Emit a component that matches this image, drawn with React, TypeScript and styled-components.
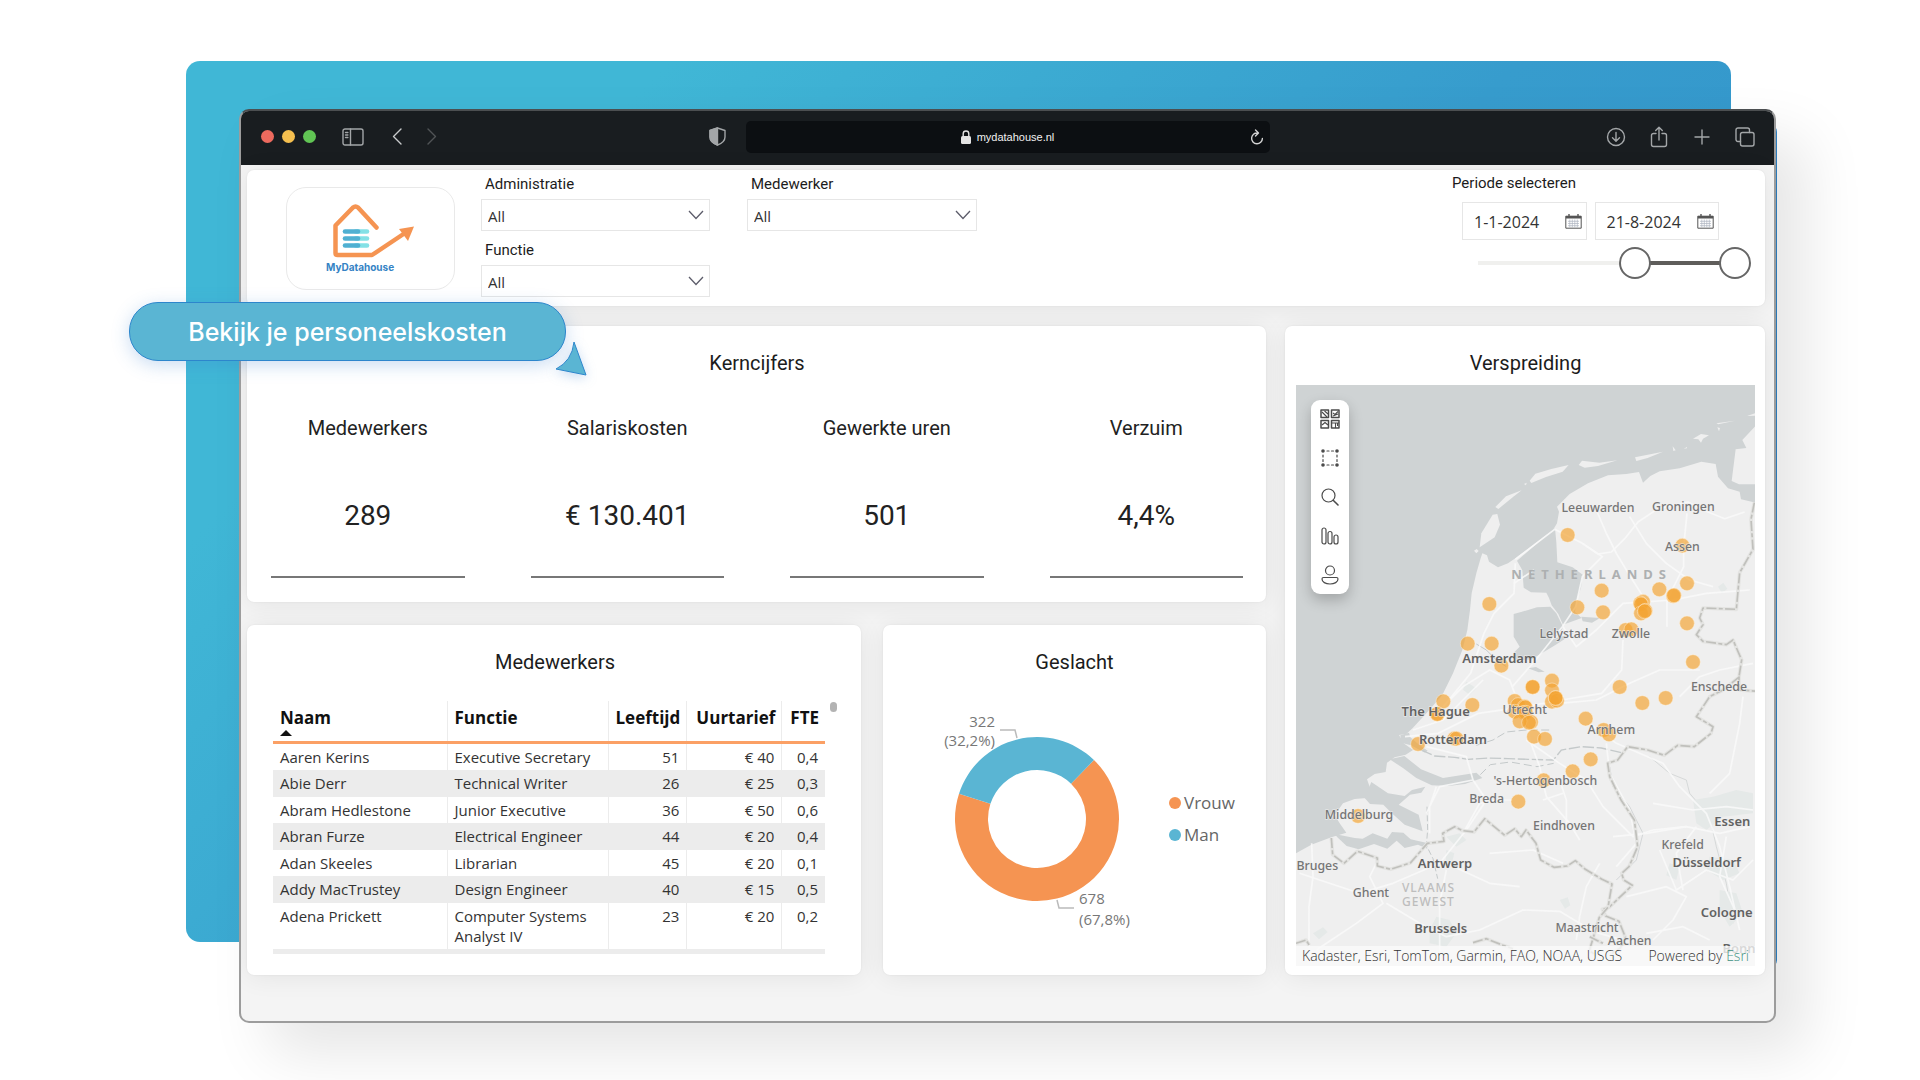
import React from "react";
import styled, { createGlobalStyle } from "styled-components";

const ui = `"Open Sans", "Noto Sans", sans-serif`;
const heading = `Roboto, "Open Sans", sans-serif`;
const orange = "#f59452";
const blue = "#5ab5d3";

const GlobalStyle = createGlobalStyle`
  *, *::before, *::after { box-sizing: border-box; }
  body { margin: 0; background: #fff; font-family: ${ui}; color: #222; }
  button, input, select { font: inherit; color: inherit; }
`;

const Page = styled.main`
  min-height: 100vh;
  display: grid;
  padding: 61px 143px 57px 129px;
  overflow: hidden;
`;
const layer = `grid-area: 1 / 1;`;
const Backdrop = styled.div`
  ${layer}
  margin: 0 46px 81px 57px;
  border-radius: 14px;
  background: linear-gradient(135deg, #40b7d6 0%, #40b7d6 20%, #379ccd 55%, #2f8fca 100%);
`;
const Accent = styled.div`
  ${layer}
  margin: 63px 0 55px 111px;
  border-radius: 8px;
  background: #2d83c8;
`;
const BrowserWindow = styled.section`
  ${layer}
  margin: 48px 1px 0 110px;
  display: flex;
  flex-direction: column;
  border: 2px solid #9c9c9c;
  border-top-color: #4c4f51;
  border-radius: 10px;
  background: #f4f4f4;
  box-shadow: 30px 30px 60px rgba(0, 0, 0, 0.1);
  overflow: hidden;
`;

/* Browser chrome */
const Chrome = styled.header`
  display: grid;
  grid-template-columns: 1fr minmax(0, 524px) 1fr;
  align-items: center;
  height: 54px;
  padding-bottom: 3px;
  flex: none;
  background: #191d20;
  color: #a3a6a8;
`;
const ChromeSide = styled.div<{ $end?: boolean }>`
  display: flex;
  align-items: center;
  gap: ${(p) => (p.$end ? "21px" : "22px")};
  padding: ${(p) => (p.$end ? "0 18px 0 0" : "0 17px 0 20px")};
  justify-content: ${(p) => (p.$end ? "flex-end" : "flex-start")};
`;
const NavButtons = styled.nav`
  display: flex;
  gap: 13px;
`;
const Lights = styled.div`
  display: flex;
  gap: 8px;
  margin-right: 4px;
`;
const Light = styled.i<{ $color: string }>`
  width: 13px;
  height: 13px;
  border-radius: 50%;
  background: ${(p) => p.$color};
`;
const IconButton = styled.button<{ $dim?: boolean; $push?: boolean }>`
  display: grid;
  place-items: center;
  width: 22px;
  height: 22px;
  padding: 0;
  border: 0;
  background: none;
  opacity: ${(p) => (p.$dim ? 0.4 : 1)};
  margin-left: ${(p) => (p.$push ? "auto" : "0")};
  svg { display: block; }
`;
const Address = styled.div`
  display: grid;
  grid-template-columns: 22px 1fr 22px;
  align-items: center;
  height: 32px;
  padding: 0 2px;
  border-radius: 5px;
  background: #0c0f12;
`;
const Site = styled.span`
  grid-column: 2;
  display: flex;
  justify-content: center;
  align-items: center;
  gap: 6px;
  color: #f1f1f1;
  font: 11px/16px "Liberation Sans", sans-serif;
`;

/* Dashboard */
const Board = styled.div`
  display: grid;
  grid-template-columns: minmax(0, 1019fr) minmax(0, 480fr);
  gap: 20px 19px;
  padding: 5px 9px 46px 6px;
`;
const Card = styled.section<{ $wide?: boolean }>`
  background: #fff;
  border-radius: 7px;
  box-shadow: 0 0 2px rgba(0, 0, 0, 0.08), 0 2px 26px rgba(0, 0, 0, 0.07);
  grid-column: ${(p) => (p.$wide ? "1 / -1" : "auto")};
  min-width: 0;
`;
const Title = styled.h2`
  margin: 0;
  font: 400 20px/24px ${heading};
  text-align: center;
  color: #1c1c1c;
`;
const TopBar = styled(Card)`
  display: flex;
  align-items: flex-start;
  min-height: 136px;
  padding: 0 14px 0 39px;
`;
const Logo = styled.figure`
  width: 169px;
  height: 103px;
  margin: 17px 26px 0 0;
  padding: 16px 0 0 39px;
  border: 1px solid #e9e9e9;
  border-radius: 20px;
  flex: none;
`;
const LogoName = styled.figcaption`
  font: 700 10px/14px Inter, sans-serif;
  color: #3583c5;
`;
const Filters = styled.div`
  display: grid;
  grid-template-columns: 229px 230px;
  gap: 9px 37px;
  padding-top: 4px;
`;
const Field = styled.label`
  display: grid;
  gap: 5px;
  min-width: 0;
`;
const Label = styled.span`
  padding-left: 4px;
  font: 400 15px/20px ${heading};
  color: #1c1c1c;
`;
const SelectBox = styled.span`
  display: grid;
  align-items: center;
  height: 32px;
  border: 1px solid #e6e6e6;
  svg { grid-area: 1 / 1; justify-self: end; margin-right: 5px; pointer-events: none; }
`;
const Select = styled.select`
  grid-area: 1 / 1;
  appearance: none;
  height: 100%;
  width: 100%;
  padding: 2px 28px 0 6px;
  border: 0;
  background: none;
  font-size: 15px;
  color: #333;
`;
const Period = styled.fieldset`
  width: 299px;
  margin: 0 0 0 auto;
  padding: 3px 0 0;
  border: 0;
  min-width: 0;
`;
const PeriodName = styled.legend`
  float: left;
  width: 100%;
  padding: 0;
  font: 400 15px/20px ${heading};
  color: #1c1c1c;
`;
const Dates = styled.div`
  clear: both;
  display: flex;
  gap: 8px;
  padding: 9px 32px 7px 10px;
`;
const DateBox = styled.span`
  flex: 1;
  display: flex;
  align-items: center;
  height: 38px;
  padding: 0 4px 0 11px;
  border: 1px solid #e6e6e6;
`;
const DateInput = styled.input`
  width: 100%;
  min-width: 0;
  padding: 1px 0 0;
  border: 0;
  background: none;
  font-size: 16px;
  color: #333;
`;
const Slider = styled.div`
  display: grid;
  align-items: center;
  height: 32px;
  margin-left: 10px;
`;
const Track = styled.div`
  ${layer}
  height: 4px;
  margin: 0 16px;
  background: linear-gradient(to right, #f0f0ee 61%, #5f5d5b 61%);
`;
const Range = styled.input`
  ${layer}
  appearance: none;
  width: 100%;
  height: 32px;
  margin: 0;
  background: none;
  pointer-events: none;
  &::-webkit-slider-thumb {
    appearance: none;
    width: 32px;
    height: 32px;
    border: 2px solid #666;
    border-radius: 50%;
    background: #fff;
    pointer-events: auto;
  }
`;
const LeftArea = styled.div`
  display: grid;
  grid-template-columns: minmax(0, 614fr) minmax(0, 383fr);
  grid-template-rows: 276px 350px;
  gap: 23px 22px;
`;
const KpiCard = styled(Card)`
  padding: 25px 23px 23px 24px;
`;
const Kpis = styled.dl`
  display: grid;
  grid-template-columns: repeat(4, 1fr);
  gap: 66px;
  margin: 41px 0 0;
`;
const Kpi = styled.div`
  display: grid;
  gap: 58px;
  padding-bottom: 42px;
  border-bottom: 2px solid #777;
  text-align: center;
  dt { font: 400 20px/24px ${heading}; color: #222; }
  dd { margin: 0; font: 400 28px/36px ${heading}; color: #222; }
`;
const TableCard = styled(Card)`
  padding: 25px 24px 20px 26px;
`;
const TableWrap = styled.div`
  display: flex;
  align-items: flex-start;
  gap: 5px;
  margin-top: 27px;
`;
const Thumb = styled.i`
  width: 7px;
  height: 10px;
  margin-top: 1px;
  border-radius: 4px;
  background: #b3b3b3;
`;
const Table = styled.table`
  flex: 1;
  border-collapse: collapse;
  table-layout: fixed;
  border-bottom: 5px solid #ececec;
`;
const Th = styled.th<{ $num?: boolean }>`
  height: 41px;
  padding: 5px 6px 0 7px;
  vertical-align: top;
  border-bottom: 3px solid #fba065;
  border-right: 1px solid #ececec;
  text-align: ${(p) => (p.$num ? "right" : "left")};
  font: 700 17px/24px ${ui};
  color: #111;
  white-space: nowrap;
  &:last-child { border-right: 0; }
  svg { display: block; }
`;
const Td = styled.td<{ $num?: boolean }>`
  padding: 3px 7px;
  border-right: 1px solid #ececec;
  vertical-align: top;
  text-align: ${(p) => (p.$num ? "right" : "left")};
  font-size: 15px;
  line-height: 20px;
  color: #333;
  &:last-child { border-right: 0; }
`;
const Tr = styled.tr`
  height: 26px;
  &:nth-child(even) { background: #ececec; height: 27px; }
`;
const ChartCard = styled(Card)`
  display: flex;
  flex-direction: column;
  padding: 25px 0 0;
`;
const ChartRow = styled.div`
  display: flex;
  align-items: center;
  flex: 1;
  padding-left: 50px;
  svg { flex: none; }
`;
const ChartText = styled.text`
  font: 15px ${ui};
  fill: #777;
`;
const Legend = styled.ul`
  list-style: none;
  display: grid;
  gap: 8px;
  margin: 0 0 0 22px;
  padding: 0 0 12px;
  li { display: flex; align-items: center; gap: 3px; font: 17px/24px ${ui}; color: #666; }
`;
const Dot = styled.i<{ $color: string }>`
  width: 12px;
  height: 12px;
  border-radius: 50%;
  background: ${(p) => p.$color};
`;
const MapCard = styled(Card)`
  display: flex;
  flex-direction: column;
  padding: 25px 10px 9px 11px;
`;
const MapFrame = styled.div`
  position: relative;
  flex: 1;
  margin-top: 10px;
  overflow: hidden;
  background: #cfd3d4;
`;
const MapSvg = styled.svg`
  display: block;
  width: 100%;
  height: 581px;
`;
const MapTools = styled.div`
  position: absolute;
  left: 15px;
  top: 15px;
  display: grid;
  gap: 17px;
  padding: 8px;
  border-radius: 9px;
  background: #fff;
  color: #4b4b4b;
  box-shadow: 0 6px 14px rgba(0, 0, 0, 0.22);
`;
const Credits = styled.footer`
  position: absolute;
  left: 0;
  right: 0;
  bottom: 0;
  display: flex;
  justify-content: space-between;
  padding: 0 6px;
  background: rgba(250, 250, 250, 0.78);
  font: 300 14px/20px ${ui};
  color: #333;
  a { color: #3f9182; text-decoration: none; }
`;
const Place = styled.text<{ $big?: boolean }>`
  font: ${(p) => (p.$big ? "600 39px" : "500 37px")} "Noto Sans", sans-serif;
  fill: ${(p) => (p.$big ? "#626262" : "#757575")};
  text-anchor: middle;
  paint-order: stroke;
  stroke: rgba(240, 240, 240, 0.7);
  stroke-width: 4px;
`;
const Region = styled.text<{ $wide?: boolean }>`
  font: ${(p) => (p.$wide ? "700 39px" : "500 36px")} "Noto Sans", sans-serif;
  letter-spacing: ${(p) => (p.$wide ? "18px" : "3px")};
  fill: ${(p) => (p.$wide ? "#adb0b1" : "#bdbdbd")};
`;

/* Callout */
const Callout = styled.div`
  ${layer}
  position: relative;
  align-self: start;
  justify-self: start;
  display: grid;
  place-items: center;
  width: 437px;
  height: 59px;
  margin-top: 241px;
  border: 1px solid #2d86cc;
  border-radius: 29px;
  background: ${blue};
  color: #fff;
  font: 500 25px/30px Inter, sans-serif;
  box-shadow: 0 4px 18px rgba(60, 130, 210, 0.28);
`;
const Pointer = styled.svg`
  position: absolute;
  left: 424px;
  top: 38px;
  filter: drop-shadow(0 3px 6px rgba(60, 130, 210, 0.3));
`;

const people = [
  ["Aaren Kerins", "Executive Secretary", "51", "€ 40", "0,4"],
  ["Abie Derr", "Technical Writer", "26", "€ 25", "0,3"],
  ["Abram Hedlestone", "Junior Executive", "36", "€ 50", "0,6"],
  ["Abran Furze", "Electrical Engineer", "44", "€ 20", "0,4"],
  ["Adan Skeeles", "Librarian", "45", "€ 20", "0,1"],
  ["Addy MacTrustey", "Design Engineer", "40", "€ 15", "0,5"],
  ["Adena Prickett", "Computer Systems Analyst IV", "23", "€ 20", "0,2"],
];
const kpis = [
  ["Medewerkers", "289"],
  ["Salariskosten", "€ 130.401"],
  ["Gewerkte uren", "501"],
  ["Verzuim", "4,4%"],
];
const places: [string, number, number, boolean?][] = [
  ["Leeuwarden", 955, 427], ["Groningen", 1211, 422], ["Assen", 1208, 542],
  ["Lelystad", 853, 805], ["Zwolle", 1054, 804], ["Amsterdam", 659, 879, true],
  ["Enschede", 1318, 962], ["The Hague", 468, 1038, true], ["Utrecht", 735, 1031],
  ["Arnhem", 995, 1091], ["Rotterdam", 520, 1122, true], ["'s-Hertogenbosch", 797, 1245],
  ["Breda", 621, 1299], ["Middelburg", 238, 1346], ["Eindhoven", 853, 1380],
  ["Essen", 1358, 1368, true], ["Krefeld", 1209, 1436], ["Antwerp", 496, 1494, true],
  ["Düsseldorf", 1281, 1492, true], ["Bruges", 113, 1500], ["Ghent", 274, 1581],
  ["Cologne", 1341, 1641, true], ["Brussels", 483, 1689, true],
  ["Maastricht", 922, 1687], ["Aachen", 1050, 1724], ["Bonn", 1378, 1748, true],
];
const pins = [
  [864, 495], [1208, 527], [1222, 640], [966, 662], [1139, 658], [1181, 678], [1183, 676],
  [893, 712], [970, 727], [1090, 695], [1082, 700], [1084, 703], [1084, 730], [1097, 722],
  [1095, 724], [1222, 760], [629, 702], [564, 821], [636, 821], [1038, 780], [1055, 778],
  [665, 887], [1240, 876], [759, 951], [759, 951], [817, 932], [817, 961], [817, 995],
  [832, 992], [828, 984], [828, 984], [1020, 951], [1088, 999], [1158, 984], [491, 994],
  [578, 1005], [473, 1032], [473, 1032], [705, 993], [715, 1005], [735, 1010], [737, 1012],
  [705, 1025], [733, 1028], [738, 1028], [754, 1056], [720, 1054], [748, 1058], [763, 1100],
  [796, 1107], [918, 1046], [972, 1080], [988, 1093], [524, 1106], [530, 1106], [415, 1122],
  [933, 1168], [879, 1204], [792, 1231], [716, 1295], [235, 1338],
];

const Chevron = () => (
  <svg width="16" height="10" viewBox="0 0 16 10" fill="none" stroke="#5c5c6a" strokeWidth="1.3">
    <path d="M1 1l7 7.5L15 1" />
  </svg>
);
const CalendarSvg = styled.svg`
  flex: none;
`;
const Calendar = () => (
  <CalendarSvg width="17" height="15" viewBox="0 0 17 15" fill="none" stroke="#555">
    <path d="M.8 2.2h15.4v12H.8z" />
    <path d="M.8 3.2h15.4" strokeWidth="2.4" />
    <path d="M4 0v3M13 0v3" strokeWidth="1.4" />
    <path d="M3 7.3h11M3 9.5h11M3 11.7h11M4.8 5.5v8M7.3 5.5v8M9.8 5.5v8M12.3 5.5v8" stroke="#aeb4c0" strokeWidth=".7" />
  </CalendarSvg>
);

function SelectField({ name }: { name: string }) {
  return (
    <Field>
      <Label>{name}</Label>
      <SelectBox>
        <Select defaultValue="All"><option>All</option></Select>
        <Chevron />
      </SelectBox>
    </Field>
  );
}

const line = { fill: "none", stroke: "currentColor", strokeWidth: 1.4, strokeLinecap: "round", strokeLinejoin: "round" } as const;

function BrowserBar() {
  return (
    <Chrome>
      <ChromeSide>
        <Lights>
          <Light $color="#ed6a5e" /><Light $color="#f5bf4f" /><Light $color="#61c554" />
        </Lights>
        <IconButton aria-label="Sidebar">
          <svg width="22" height="18" viewBox="0 0 22 18" {...line}>
            <rect x="1" y="1" width="20" height="16" rx="2" /><path d="M8.5 1v16M3.5 4.5h2.4M3.5 7h2.4M3.5 9.5h2.4" />
          </svg>
        </IconButton>
        <NavButtons>
          <IconButton aria-label="Back">
            <svg width="10" height="17" viewBox="0 0 10 17" {...line} stroke="#c9cbcc"><path d="M9 1L1.5 8.5 9 16" /></svg>
          </IconButton>
          <IconButton aria-label="Forward" $dim>
            <svg width="10" height="17" viewBox="0 0 10 17" {...line}><path d="M1 1l7.5 7.5L1 16" /></svg>
          </IconButton>
        </NavButtons>
        <IconButton aria-label="Privacy" $push>
          <svg width="17" height="19" viewBox="0 0 17 19" {...line}>
            <path d="M8.5 1L16 3.5V10c0 4-3.5 6.5-7.5 8C4.500 16.500 1 14 1 10V3.500z" />
            <path d="M8.500 1v17C4.500 16.500 1 14 1 10V3.500z" fill="currentColor" />
          </svg>
        </IconButton>
      </ChromeSide>
      <Address>
        <Site>
          <svg width="10" height="14" viewBox="0 0 10 14">
            <rect y="6" width="10" height="8" rx="1.500" fill="#e4e4e4" />
            <path d="M2.200 6.500V3.800a2.800 2.800 0 015.600 0v2.700" fill="none" stroke="#e4e4e4" strokeWidth="1.400" />
          </svg>
          mydatahouse.nl
        </Site>
        <IconButton aria-label="Reload">
          <svg width="14" height="16" viewBox="0 0 14 16" {...line} stroke="#d4d4d4">
            <path d="M7.500 4A5.400 5.400 0 1012.400 9.500M5.500 1l3 3-3 3" />
          </svg>
        </IconButton>
      </Address>
      <ChromeSide $end>
        <IconButton aria-label="Downloads">
          <svg width="20" height="20" viewBox="0 0 20 20" {...line}><circle cx="10" cy="10" r="8.500" /><path d="M10 5.500v8.500M6.500 10.800L10 14.200l3.500-3.400" /></svg>
        </IconButton>
        <IconButton aria-label="Share">
          <svg width="18" height="22" viewBox="0 0 18 22" {...line}><path d="M6 7.500H3.500a2 2 0 00-2 2v9a2 2 0 002 2h11a2 2 0 002-2v-9a2 2 0 00-2-2H12M9 14V1.500M5.700 4.500L9 1.300l3.300 3.200" /></svg>
        </IconButton>
        <IconButton aria-label="New tab">
          <svg width="16" height="16" viewBox="0 0 16 16" {...line}><path d="M8 1v14M1 8h14" /></svg>
        </IconButton>
        <IconButton aria-label="Tabs">
          <svg width="20" height="20" viewBox="0 0 20 20" {...line}>
            <rect x="5.500" y="5.500" width="13.500" height="13.500" rx="2" />
            <path d="M5.500 14.500H3a2 2 0 01-2-2V3a2 2 0 012-2h9.500a2 2 0 012 2v2.500" />
          </svg>
        </IconButton>
      </ChromeSide>
    </Chrome>
  );
}

function NetherlandsMap() {
  return (
    <MapSvg viewBox="49 45 1377 1743" preserveAspectRatio="xMidYMid slice" role="img" aria-label="Verspreiding">
      <g fill="#efefef">
        <path d="M49 1450L95 1424 155 1402 200 1388 180 1360 165 1335 190 1300 225 1287 262 1284 270 1250 262 1228 285 1212 318 1206 322 1178 345 1162 378 1154 400 1140 372 1120 358 1095 380 1092 400 1073 440 1030 488 975 520 910 548 840 563 780 571 720 576 670 590 610 603 565 608 550 622 556 628 575 655 592 685 580 707 565 820 480 832 460 838 425 832 410 870 372 925 340 985 316 1040 312 1078 306 1090 338 1112 318 1140 304 1200 295 1265 275 1308 282 1315 320 1345 355 1380 365 1384 388 1430 398V1790H49z" />
        <path d="M1430 165l-42 45 12 24-32 4-12 95 22 10h52z" />
        <path d="M600 532l5-42 34-56 14-2 8 32-16 38z" />
        <path d="M583 542l8-5 6 6-7 7zM647 411l32-32 47-18-26 20-44 36zM733 342l8-4-2 8z" />
        <path d="M750 332l17-21 48-14 52-12-18 20-50 16-44 18zM897 285l10-13 52 6 54-7-58 17-40 5zM1066 262l84-17-46 19-34 9zM1179 229l9 12-7 2zM1212 236l10-5v4zM1240 206l24-14 24 4-18 10-6 12-8-10zM1310 160l56-8-50 11zM1313 172l8 2-3 10zM1402 138l24-8v7z" />
      </g>
      <g fill="#cfd3d4">
        <path d="M712 572L826 475l4 42 3 60 46 15 30 22-5 40-14 40-4 32 20 18-56 20-14-32-20-26-8-22-8-16-46-1-22-14-4-52z" />
        <path d="M702 732l22-6 48-14 40-2 18 20 20 40-4 10-24 26 60-16-56 36-70 42-44 4-10-24 18-18-18-30z" />
        <path d="M905 740l56 4-24 14-28-4zM745 895l24-4 26 14-18 2z" />
        {/* Scheldt and Haringvliet waters */}
        <path d="M165 1392l60 12 24 2 30-16 44 16 14-20 34 2 22 20 46 10 4 18-28-12-40 10-24-22-28 24-40-14-46 16-36-10-28-26z" />
        <path d="M255 1284l20-48 50 34 50 8 22-18 40-10-12 18-34 6-34 30 60 30 12 50-54-20-40-36-24-24-40-2z" />
        <path d="M330 1168l44-10 50 40 66 26 100-16 18 16-52 18-50 6-50-2-46-22-40-30z" />
        <path d="M362 1096l26-8 4 14 26 22 26 18-8 6-42-22-30-8z" />
      </g>
      <g fill="none" stroke="#c4c9ca" strokeWidth="4">
        <path d="M425 1140l40 18 60 4 40 6 60-4 60 2 60 2 76 2 24-30 60-10 60 4 60 14" strokeDasharray="34 8" />
        <path d="M590 1126l50-16 40-24 60-6 70 0" strokeDasharray="24 10" strokeWidth="3" />
        <path d="M602 1214l30-30 60-8 80 14 50-10" strokeDasharray="24 12" strokeWidth="3" />
        <path d="M590 822l30 18 30 30 30 20" strokeWidth="3" />
        <path d="M990 1190l10 60 50 60 40 80-20 80-60 60" strokeWidth="2" />
        <path d="M1110 1160l60 50 50 20 10 40 60 70 20 90 30 110 20 120" strokeWidth="3" opacity=".6" />
        <path d="M442 1310l2 70-4 46 20 40 14 60" strokeDasharray="18 8" strokeWidth="3" />
      </g>
      <g fill="#e5e9e8">
        <path d="M1240 1290l60-10 70-20 50 10v60l-90 10-50 40-30-20zM1290 1460l70 10 20 40-50 20-50-30zM1320 1560l50 10 20 60-40 40-30-50zM470 1640l40 10 20 40-30 40-50-10 0-40zM500 1400l40-10 20 20-30 20zM560 935l30 20-20 20-20-16zM100 1690l30-18 14 14-26 22zM840 1590l24-8 8 24-16 10zM500 1440l24 10-10 40-16-10zM1315 650l16-12 12 18-16 14zM1170 1480l30 10-10 40-30-14z" />
      </g>
      <g fill="none" stroke="#fafafa" strokeWidth="5" strokeLinejoin="round" opacity=".85">
        <path d="M707 568l118-90 80 40 50 34 40-6 40-40 40-50 60-40 90-20 60 30 50 20 60-20" />
        <path d="M950 420l30 70 30 60 30 50 50 80-10 60M1050 440l50 80 60 60 70 50 70 20M1222 430l-10 100 0 60-50 100 0 80" />
        <path d="M908 520l60 40-60 60-20 90-40 60-80 100-70 80M707 580l-4 90-60 60-30 60-20 60-20 60-90 110" />
        <path d="M703 640l60-40M850 770l40 60 60-50 80-80 150-10 100-20 130-10M1030 810l-4 90-60 70-120 20-110 20-140 20-120 60-100 10" />
        <path d="M1260 900l-120 0-90 40-100 50-110 10M1200 980l60-60 60-20 100-20M740 1020l10 90 30 80 20 90 70 80 30 50" />
        <path d="M490 1010l60-60 80-50 60 30 30 80M400 1080l90-30 60-60 60-60M440 1130l120 30 20 70 40 60-60 90-80 100-140 60-100 30-120-40-60-20" />
        <path d="M740 1110l100 70 80 50 50 80 90 90 60-20 100-10M980 1120l10 90 60 110 20 100-60 70M930 1060l80 60 140 60 50 70 80 80 40 100 30 120 30 130" />
        <path d="M96 1420l4 100-12 90 0 130M110 1740l120-80 80-60-40-80 20-40M500 1500l-20 100 0 180M320 1600l100 60 80 40 100-20 130-60 110 4 100 60 100 30M500 1480l130 60 90 10M630 1450l130-10 90 40" />
        <path d="M470 1250l-20 60 0 80M580 1230l-100 20-40 80M700 1290l-50 0-50 10-50 90M790 1290l60-20M860 1380l0-90-20-60M1000 1400l100-10 120-20 100 20 90-20" />
        <path d="M960 1480l-40 70-20 90-10 70M1040 1580l120-30 60 30-40 70-60 60M1140 1440l50 120 90-60 80 30 60-60M1100 1690l110-20 80 40M1290 1270l60-60 30-150 10-80" />
        <path d="M1120 1300l120 20 100-10 80 10M1250 1370l-60 80 20 110M1340 1400l-20 120 50 110" />
      </g>
      <g fill="none" strokeLinejoin="round">
        {["M1424 398l-10 50 6 90-40 70-10 110-100-4-10 30 10 20-20 30 20 20 70 10 20-14 26 60-8 50 0 40 60 4M1380 920l-50 40-40 20-40 60 50 30-6 20-50 40-50-4-40 30-50-16-60-10-30 40-30 10 6 40 34 70 40 60 10 80-26 60-22 20 6 20 26 16-70 66-20 6 10 20 40 16 20 50-16 30-30 20",
          "M155 1404l4 50 34 26 40-36 60 20 0 24 40 10 60-20 50-58 50-6-4-24 36-20 24 12 34 4 32-40 60 50 30-20 20 24 14-20 30 40 14 50 40 22 40-4 24-16 30 26 50 30 30 14-12 70-26 30-18 60-12 40 20 14",
          "M49 1720l30-10 10 16M580 1718l40-12 50 20 30 10M980 1660l10 10M930 1700l40 20"].map((d) => (
          <React.Fragment key={d}>
            <path d={d} stroke="#e4e4e2" strokeWidth="11" />
            <path d={d} stroke="#c0c0bc" strokeWidth="5" strokeDasharray="30 7 12 7" />
          </React.Fragment>
        ))}
      </g>
      <g fill="#f3a332" fillOpacity=".68" stroke="#fff3dd" strokeOpacity=".7" strokeWidth="2">
        {pins.map(([x, y], i) => <circle key={i} cx={x} cy={y} r="22" />)}
      </g>
      <Region $wide x="695" y="628">NETHERLANDS</Region>
      <Region x="367" y="1567">VLAAMS</Region>
      <Region x="367" y="1609">GEWEST</Region>
      {places.map(([name, x, y, big]) => <Place key={name} x={x} y={y} $big={big}>{name}</Place>)}
    </MapSvg>
  );
}

function MapToolbar() {
  const thin = { ...line, strokeWidth: 1.2 };
  return (
    <MapTools>
      <IconButton aria-label="Basemap">
        <svg width="20" height="20" viewBox="0 0 20 20" {...thin} strokeWidth={1.5} strokeLinecap="butt">
          <path d="M1 1h7.500v7.500H1zM11.500 1H19v7.500h-7.500zM1 11.500h7.500V19H1zM11.500 11.500H19V19h-7.500z" />
          <path d="M2 3l5 5M4.500 2L8 5M13 4l2 1.500L18 2.500M13 7l5-2M2 16l3-2.500L8 16M12 14h7M15.500 14v5M17.500 14v3" strokeWidth="1.100" />
        </svg>
      </IconButton>
      <IconButton aria-label="Selectie">
        <svg width="18" height="18" viewBox="0 0 18 18" {...thin}>
          <path d="M6 2h2M10.500 2h2M6 16h2M10.500 16h2M2 6v2M2 10.500v2M16 6v2M16 10.500v2" />
          <g fill="currentColor" stroke="none"><circle cx="2" cy="2" r="1.800" /><circle cx="16" cy="2" r="1.800" /><circle cx="2" cy="16" r="1.800" /><circle cx="16" cy="16" r="1.800" /></g>
        </svg>
      </IconButton>
      <IconButton aria-label="Zoeken">
        <svg width="18" height="18" viewBox="0 0 18 18" {...thin}><circle cx="7.500" cy="7.500" r="6.500" /><path d="M12.200 12.200L17 17" strokeWidth="1.600" /></svg>
      </IconButton>
      <IconButton aria-label="Infographics">
        <svg width="18" height="18" viewBox="0 0 18 18" {...thin}>
          <rect x="1" y="1" width="4" height="16" rx="2" /><rect x="7" y="4.500" width="4" height="12.500" rx="2" /><rect x="13" y="8" width="4" height="9" rx="2" />
        </svg>
      </IconButton>
      <IconButton aria-label="Account">
        <svg width="18" height="20" viewBox="0 0 18 20" {...thin}><circle cx="9" cy="5.500" r="4.500" /><path d="M2.500 12.500h13c1 0 1.500.7 1.500 1.500 0 3-3.500 5-8 5s-8-2-8-5c0-.8.500-1.500 1.500-1.500z" /></svg>
      </IconButton>
    </MapTools>
  );
}

const LogoMark = styled.svg`
  display: block;
`;

const at = (deg: number, r: number) => {
  const a = (deg * Math.PI) / 180;
  return `${104 + r * Math.sin(a)} ${105 - r * Math.cos(a)}`;
};
const arc = (from: number, to: number) => {
  const big = to - from > 180 ? 1 : 0;
  return `M${at(from, 82)}A82 82 0 ${big} 1 ${at(to, 82)}L${at(to, 49)}A49 49 0 ${big} 0 ${at(from, 49)}Z`;
};

export default function App() {
  return (
    <>
      <GlobalStyle />
      <Page>
        <Backdrop />
        <Accent />
        <BrowserWindow>
          <BrowserBar />
          <Board>
            <TopBar $wide>
              <Logo>
                <LogoMark width="90" height="56" viewBox="40 17 90 56" fill="none">
                  <path d="M90.500 40.500L72 20.500q-2.500-2-5 0L49.500 38.500V66q0 2 2 2H86L122 44" stroke={orange} strokeWidth="4.500" strokeLinecap="round" strokeLinejoin="round" />
                  <path d="M128 39.500l-15 2.500 9 12z" fill={orange} />
                  {[44.5, 51.5, 58.5].map((y) => (
                    <g key={y} strokeWidth="4.600" strokeLinecap="round">
                      <path d={`M70 ${y}H81`} stroke="#84e1e6" />
                      <path d={`M59 ${y}H72`} stroke="#4fb0d2" />
                    </g>
                  ))}
                </LogoMark>
                <LogoName>MyDatahouse</LogoName>
              </Logo>
              <Filters>
                <SelectField name="Administratie" />
                <SelectField name="Medewerker" />
                <SelectField name="Functie" />
              </Filters>
              <Period>
                <PeriodName>Periode selecteren</PeriodName>
                <Dates>
                  <DateBox><DateInput aria-label="Van" defaultValue="1-1-2024" /><Calendar /></DateBox>
                  <DateBox><DateInput aria-label="Tot" defaultValue="21-8-2024" /><Calendar /></DateBox>
                </Dates>
                <Slider>
                  <Track />
                  <Range type="range" aria-label="Begin" min="0" max="100" defaultValue="61" />
                  <Range type="range" aria-label="Eind" min="0" max="100" defaultValue="100" />
                </Slider>
              </Period>
            </TopBar>

            <LeftArea>
              <KpiCard $wide>
                <Title>Kerncijfers</Title>
                <Kpis>
                  {kpis.map(([name, value]) => <Kpi key={name}><dt>{name}</dt><dd>{value}</dd></Kpi>)}
                </Kpis>
              </KpiCard>
              <TableCard>
                <Title>Medewerkers</Title>
                <TableWrap>
                  <Table>
                    <colgroup>
                      <col width="174" /><col width="161" /><col width="78" /><col width="95" /><col />
                    </colgroup>
                    <thead>
                      <tr>
                        <Th>Naam<svg width="12" height="6" viewBox="0 0 12 6"><path d="M6 0l6 6H0z" fill="#111" /></svg></Th>
                        <Th>Functie</Th><Th $num>Leeftijd</Th><Th $num>Uurtarief</Th><Th $num>FTE</Th>
                      </tr>
                    </thead>
                    <tbody>
                      {people.map((row) => (
                        <Tr key={row[0]}>{row.map((cell, i) => <Td key={i} $num={i > 1}>{cell}</Td>)}</Tr>
                      ))}
                    </tbody>
                  </Table>
                  <Thumb />
                </TableWrap>
              </TableCard>
              <ChartCard>
                <Title>Geslacht</Title>
                <ChartRow>
                  <svg width="214" height="230" viewBox="0 -4 214 230" role="img" aria-label="Geslacht">
                    <path d={arc(44, 288)} fill={orange} />
                    <path d={arc(-72, 44)} fill={blue} />
                    <path d="M67 16h15l2 8M124 186l2 8h15" fill="none" stroke="#bbb" strokeWidth="1.500" />
                    <ChartText x="62" y="13" textAnchor="end">322</ChartText>
                    <ChartText x="62" y="32" textAnchor="end">(32,2%)</ChartText>
                    <ChartText x="146" y="190">678</ChartText>
                    <ChartText x="146" y="211">(67,8%)</ChartText>
                  </svg>
                  <Legend>
                    <li><Dot $color={orange} />Vrouw</li>
                    <li><Dot $color={blue} />Man</li>
                  </Legend>
                </ChartRow>
              </ChartCard>
            </LeftArea>

            <MapCard>
              <Title>Verspreiding</Title>
              <MapFrame>
                <NetherlandsMap />
                <MapToolbar />
                <Credits>
                  <span>Kadaster, Esri, TomTom, Garmin, FAO, NOAA, USGS</span>
                  <span>Powered by <a href="#esri">Esri</a></span>
                </Credits>
              </MapFrame>
            </MapCard>
          </Board>
        </BrowserWindow>
        <Callout>
          Bekijk je personeelskosten
          <Pointer width="34" height="36" viewBox="0 0 34 36">
            <path d="M20 1l12 33L2 28Q18 20 20 1z" fill={blue} stroke="#2d86cc" />
          </Pointer>
        </Callout>
      </Page>
    </>
  );
}
